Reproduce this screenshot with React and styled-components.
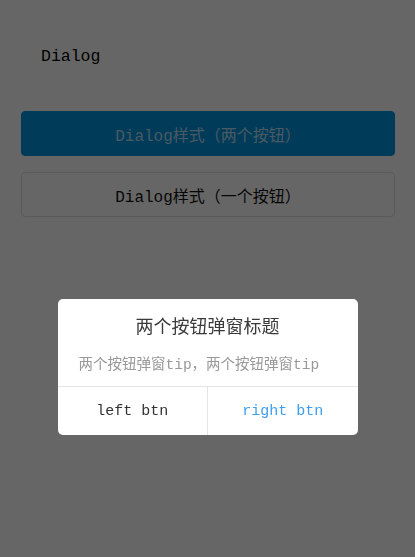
import React from 'react';
import styled, { createGlobalStyle } from 'styled-components';

const GlobalStyle = createGlobalStyle`
  html, body {
    margin: 0;
    padding: 0;
    background: #ffffff;
  }
  body {
    font-family: "Liberation Mono", "Noto Sans CJK SC", monospace;
    color: #111;
  }
`;

const Page = styled.div`
  min-height: 557px;
  padding: 0 20px 0 21px;
  box-sizing: border-box;
`;

const Header = styled.div`
  padding: 42px 0 0 20px;
  height: 111px;
  box-sizing: border-box;
  font-size: 16.5px;
  line-height: 30px;
  color: #000;
`;

const Button = styled.div`
  height: 45px;
  border-radius: 4px;
  display: flex;
  align-items: center;
  justify-content: center;
  box-sizing: border-box;
  font-size: 16px;
  margin-bottom: 16px;
  background: ${p => (p.$primary ? '#0093e0' : '#ffffff')};
  color: ${p => (p.$primary ? 'rgba(255,255,255,0.72)' : '#111')};
  border: 1px solid ${p => (p.$primary ? '#0093e0' : '#e2e2e2')};
`;

const Mask = styled.div`
  position: fixed;
  inset: 0;
  background: rgba(0, 0, 0, 0.6);
  display: flex;
  flex-direction: column;
  align-items: center;
  padding-top: 299px;
  box-sizing: border-box;
`;

const Dialog = styled.div`
  width: 300px;
  background: #fff;
  border-radius: 5px;
  overflow: hidden;
`;

const DialogBody = styled.div`
  padding: 17px 21px 11px;
  display: flex;
  flex-direction: column;
  gap: 15px;
`;

const Title = styled.div`
  text-align: center;
  font-size: 18px;
  line-height: 24px;
  color: #3a3a3a;
`;

const Tip = styled.div`
  font-size: 14.5px;
  line-height: 20px;
  color: #999;
  white-space: nowrap;
`;

const Footer = styled.div`
  display: flex;
  border-top: 1px solid #e5e5e5;
  height: 48px;
`;

const FooterBtn = styled.div`
  flex: 1;
  display: flex;
  align-items: center;
  justify-content: center;
  font-size: 15px;
  color: ${p => (p.$confirm ? '#3d9ef0' : '#333')};
  & + & {
    border-left: 1px solid #e5e5e5;
  }
`;

export default function App() {
  return (
    <>
      <GlobalStyle />
      <Page>
        <Header>Dialog</Header>
        <Button $primary>Dialog样式（两个按钮）</Button>
        <Button>Dialog样式（一个按钮）</Button>
      </Page>
      <Mask>
        <Dialog>
          <DialogBody>
            <Title>两个按钮弹窗标题</Title>
            <Tip>两个按钮弹窗tip，两个按钮弹窗tip</Tip>
          </DialogBody>
          <Footer>
            <FooterBtn>left btn</FooterBtn>
            <FooterBtn $confirm>right btn</FooterBtn>
          </Footer>
        </Dialog>
      </Mask>
    </>
  );
}
